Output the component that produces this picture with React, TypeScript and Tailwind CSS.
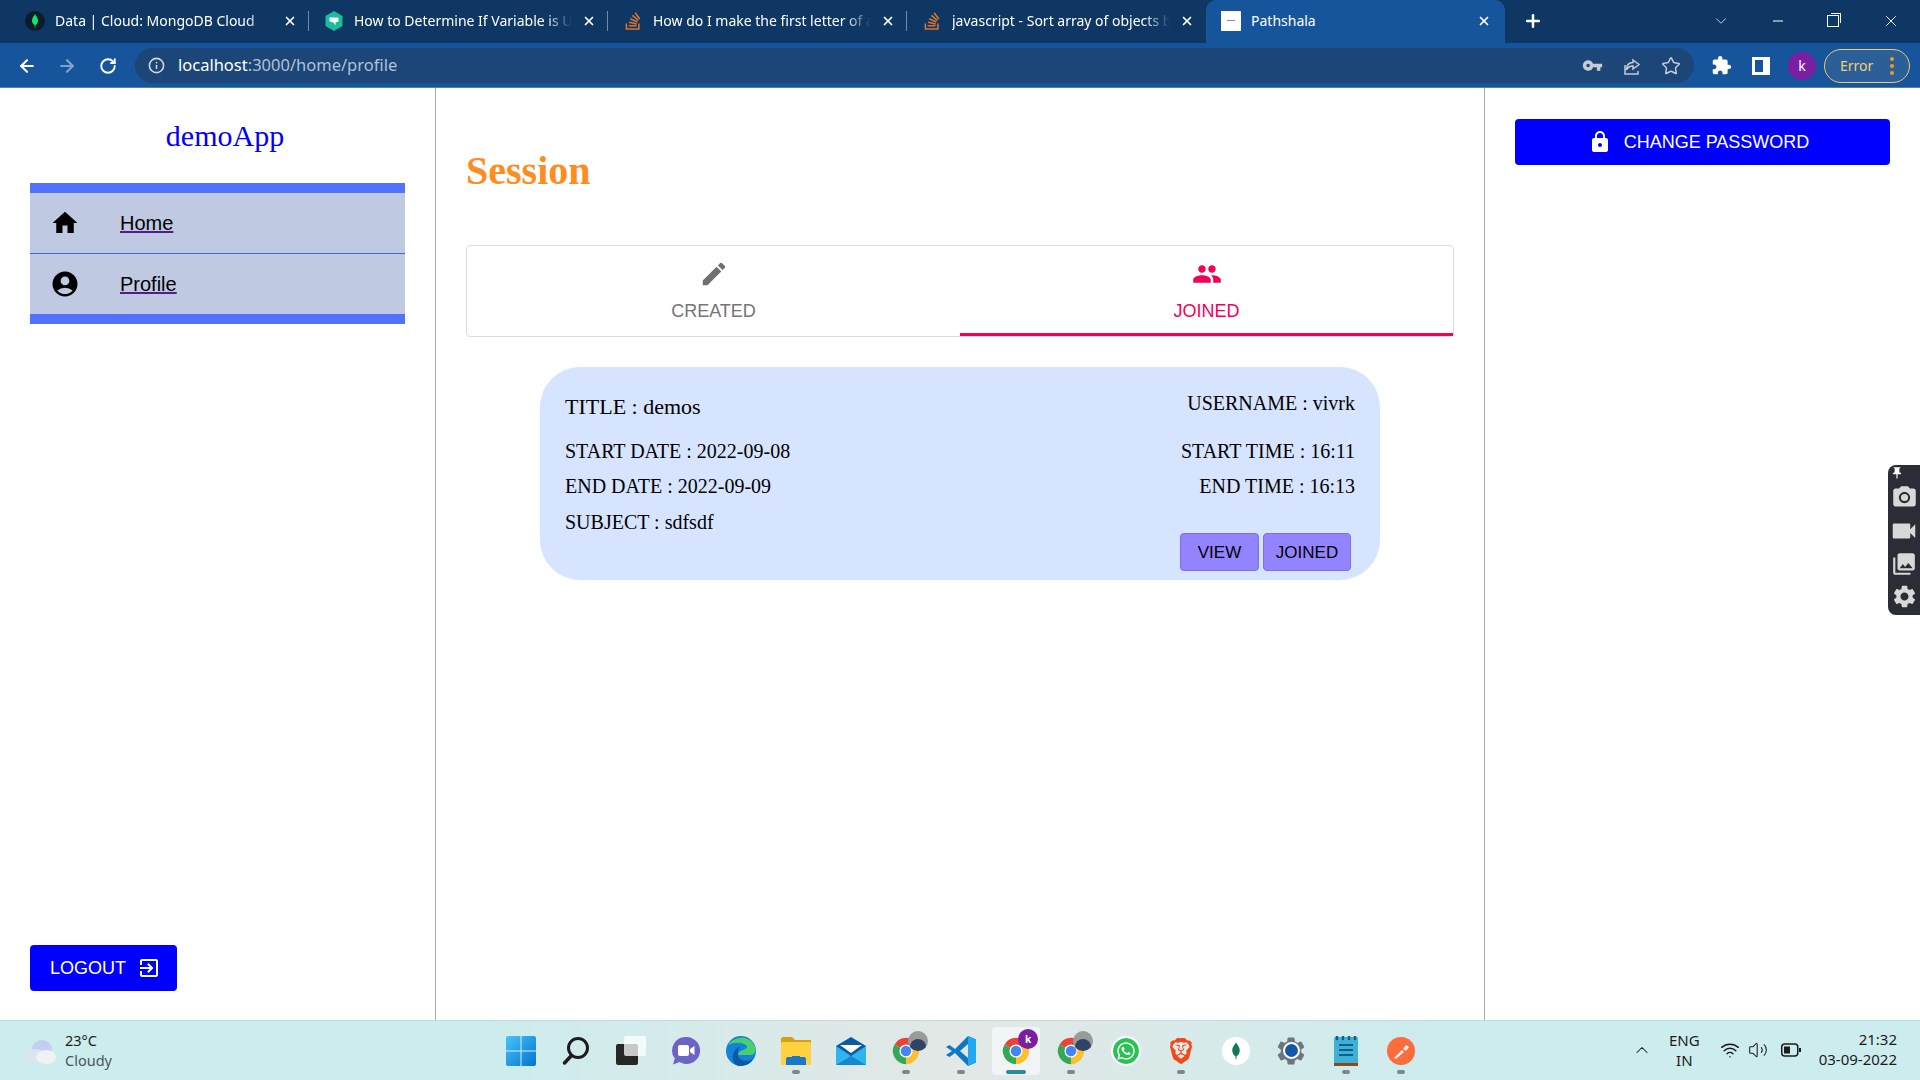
import type { ReactNode } from "react";
import { ArrowLeft, ArrowRight, RotateCw, Info, Star, X, Plus, ChevronDown, Minus, ChevronUp, Wifi, Volume2 } from "lucide-react";
import {
  MdHome,
  MdAccountCircle,
  MdEdit,
  MdPeople,
  MdLock,
  MdExitToApp,
  MdVpnKey,
  MdExtension,
  MdCameraAlt,
  MdVideocam,
  MdPhotoLibrary,
  MdSettings,
  MdPushPin,
} from "react-icons/md";
import { FaStackOverflow, FaWhatsapp } from "react-icons/fa";
import { SiBrave } from "react-icons/si";

const SANS = "font-['Liberation_Sans',Arial,sans-serif]";
const SERIF = "font-['Liberation_Serif','Times_New_Roman',serif]";
const UI = "font-['Noto_Sans','Open_Sans',sans-serif]";

/* Small logos */
const MongoLeaf = ({ className = "" }: { className?: string }) => (
  <svg viewBox="0 0 16 28" className={className}>
    <path d="M8 0c1 3 6 7 6 13 0 5-3 8-5 9l-.4 5h-1.2l-.4-5c-2-1-5-4-5-9C2 7 7 3 8 0z" fill="currentColor" />
  </svg>
);

const HexFav = () => (
  <svg viewBox="0 0 20 20" className="w-5 h-5">
    <path d="M10 0l8.5 5v10L10 20l-8.5-5V5z" fill="#1abc9c" />
    <path d="M5.5 6.5h9v4l-3 1v3l-2-3-4-1z" fill="#fff" />
  </svg>
);

const Chrome = () => (
  <svg viewBox="0 0 32 32" className="w-7 h-7">
    <path d="M16 16L3 8.5A15 15 0 0 1 29 8.5Z" fill="#ea4335" />
    <path d="M16 16L29 8.5A15 15 0 0 1 16 31Z" fill="#fbc02d" />
    <path d="M16 16L16 31A15 15 0 0 1 3 8.5Z" fill="#34a853" />
    <circle cx="16" cy="16" r="7.5" fill="#fff" />
    <circle cx="16" cy="16" r="6" fill="#4285f4" />
  </svg>
);

const PhotoBadge = () => (
  <span className="absolute top-[-6px] right-[-8px] w-5 h-5 rounded-full overflow-hidden bg-[#9a9a9a] flex items-end justify-center">
    <span className="w-4 h-3 rounded-t-full bg-[#2f4468]" />
  </span>
);

const WinLogo = () => (
  <svg viewBox="0 0 30 30" className="w-[30px] h-[30px]">
    <defs>
      <linearGradient id="w" x1="0" y1="0" x2="1" y2="1">
        <stop offset="0" stopColor="#45c5fb" />
        <stop offset="1" stopColor="#0472d0" />
      </linearGradient>
    </defs>
    <rect width="30" height="30" rx="2" fill="url(#w)" />
    <path d="M15 0v30M0 15h30" stroke="#d9f0f2" strokeWidth="1" />
  </svg>
);

const SearchLogo = () => (
  <svg viewBox="0 0 28 30" className="w-[28px] h-[30px]">
    <circle cx="16" cy="12" r="9.5" fill="none" stroke="#1c1c1c" strokeWidth="3" />
    <path d="M9.5 19.5L2.5 27" stroke="#1c1c1c" strokeWidth="3.5" strokeLinecap="round" />
  </svg>
);

const TaskView = () => (
  <svg viewBox="0 0 30 30" className="w-[30px] h-[30px]">
    <rect x="0" y="8" width="22" height="21" rx="2" fill="#262626" />
    <rect x="8" y="0" width="22" height="20" rx="2" fill="#fff" fillOpacity="0.75" />
  </svg>
);

const Meet = () => (
  <svg viewBox="0 0 30 30" className="w-[30px] h-[30px]">
    <path d="M15.5 1a13.5 13.5 0 1 1-7 25L2 28.5l1.8-6A13.5 13.5 0 0 1 15.5 1z" fill="#6b63c6" />
    <rect x="7" y="9" width="11" height="11" rx="2" fill="#fff" />
    <path d="M19 13l4.5-3v9L19 16z" fill="#fff" />
  </svg>
);

const Edge = () => (
  <svg viewBox="0 0 30 30" className="w-[30px] h-[30px]">
    <circle cx="15" cy="15" r="15" fill="#1283d8" />
    <path d="M2 9C6 1 24-3 29 11c2 6-2 8-6 8H12c0-5 9-5 9-8 0-4-12-6-19-2z" fill="#48cf6e" />
    <path d="M12 18c0 6 7 9 15 5-3 5-8 7-13 7C7 30 5 22 8 16c1-3 4-5 6-5-2 2-2 4-2 7z" fill="#0c5aa6" />
  </svg>
);

const Folder = () => (
  <svg viewBox="0 0 30 28" className="w-[30px] h-[28px]">
    <path d="M0 2a2 2 0 0 1 2-2h9l3 3h16v7H0z" fill="#d99f12" />
    <rect y="5" width="30" height="23" rx="1.5" fill="#fdd13f" />
    <path d="M5 22a2 2 0 0 1 2-2h4v-1h8v1h4a2 2 0 0 1 2 2v6H5z" fill="#1a78c8" />
  </svg>
);

const Mail = () => (
  <svg viewBox="0 0 30 28" className="w-[30px] h-[28px]">
    <path d="M0 9L15 0l15 9v19H0z" fill="#0c5aa6" />
    <path d="M4 8h22l-11 8z" fill="#fff" />
    <path d="M0 9l15 10L30 9v19H0z" fill="#2fb4ec" />
    <path d="M0 28l15-9 15 9z" fill="#1487d2" />
  </svg>
);

const VsCode = () => (
  <svg viewBox="0 0 30 30" className="w-[30px] h-[30px]">
    <path d="M22 0l8 3.5v23L22 30 9 17l-5.500 4L0 19l6-4-6-4 3.500-2L9 13z" fill="#0f78c4" />
    <path d="M22 0l8 3.500v23L22 30z" fill="#22a7f0" />
    <path d="M22 8l-8 7 8 7z" fill="#e0e8e6" />
  </svg>
);

const Settings = () => (
  <span className="relative flex items-center justify-center">
    <MdSettings className="w-[34px] h-[34px] text-[#6d7580]" />
    <span className="absolute w-[13px] h-[13px] rounded-full bg-[#1358a8] outline-2 outline-white" />
  </span>
);

const Notepad = () => (
  <svg viewBox="0 0 24 30" className="w-[24px] h-[30px]">
    <rect y="1" width="24" height="27" rx="1.5" fill="#3fb0d6" />
    <rect y="27" width="24" height="3" fill="#8a4b16" />
    <path d="M5 9h14M5 14h14M5 19h14" stroke="#0d5f8c" strokeWidth="1.800" />
    <path d="M3 0v3M9 0v3M15 0v3M21 0v3" stroke="#0d5f8c" strokeWidth="2.400" strokeLinecap="round" />
  </svg>
);

const Postman = () => (
  <svg viewBox="0 0 28 28" className="w-7 h-7">
    <circle cx="14" cy="14" r="14" fill="#fd6c3c" />
    <path d="M7 21l8-8 2 2-8 7zM16 12l3-4 3 2-3 4z" fill="#fff" fillOpacity="0.9" />
  </svg>
);

type TaskItem = { icon: ReactNode; dot?: boolean; active?: boolean };

const taskItems: TaskItem[] = [
  { icon: <WinLogo /> },
  { icon: <SearchLogo /> },
  { icon: <TaskView /> },
  { icon: <Meet /> },
  { icon: <Edge /> },
  { icon: <Folder />, dot: true },
  { icon: <Mail /> },
  {
    icon: (
      <span className="relative block">
        <Chrome />
        <PhotoBadge />
      </span>
    ),
    dot: true,
  },
  { icon: <VsCode />, dot: true },
  {
    icon: (
      <span className="relative block">
        <Chrome />
        <span className="absolute top-[-8px] right-[-8px] w-5 h-5 rounded-full bg-[#7b1fa2] text-white text-[10px] font-bold flex items-center justify-center">
          k
        </span>
      </span>
    ),
    active: true,
  },
  {
    icon: (
      <span className="relative block">
        <Chrome />
        <PhotoBadge />
      </span>
    ),
    dot: true,
  },
  {
    icon: (
      <span className="w-[26px] h-[26px] rounded-full bg-[#29c254] outline-2 outline-white flex items-center justify-center">
        <FaWhatsapp className="w-5 h-5 text-white" />
      </span>
    ),
  },
  { icon: <SiBrave className="w-[26px] h-[30px] text-[#f4481c]" />, dot: true },
  {
    icon: (
      <span className="w-7 h-7 rounded-full bg-white flex items-center justify-center">
        <MongoLeaf className="h-[22px] w-[10px] text-[#13794f]" />
      </span>
    ),
  },
  { icon: <Settings /> },
  { icon: <Notepad />, dot: true },
  { icon: <Postman />, dot: true },
];

type Tab = { title: string; icon: ReactNode };

const tabs: Tab[] = [
  {
    title: "Data | Cloud: MongoDB Cloud",
    icon: (
      <span className="w-5 h-5 rounded-full bg-[#0b1d2c] flex items-center justify-center">
        <MongoLeaf className="h-4 w-2 text-[#13e46a]" />
      </span>
    ),
  },
  { title: "How to Determine If Variable is U", icon: <HexFav /> },
  { title: "How do I make the first letter of a", icon: <FaStackOverflow className="w-5 h-5 text-[#d9762b]" /> },
  { title: "javascript - Sort array of objects b", icon: <FaStackOverflow className="w-5 h-5 text-[#d9762b]" /> },
];

function ChromeBar() {
  return (
    <div className={`${UI} shrink-0`}>
      {/* Tabs */}
      <div className="h-[43px] bg-[#0f3763] flex items-end pl-[10px] text-white text-[14px]">
        {tabs.map((tab, i) => (
          <div key={tab.title} className="w-[299px] h-[43px] flex items-center pl-[15px] pr-[12px] pb-[2px] relative">
            <span className="w-5 h-5 flex items-center justify-center shrink-0">{tab.icon}</span>
            <span className="ml-[10px] flex-1 whitespace-nowrap overflow-hidden [mask-image:linear-gradient(to_right,black_88%,transparent)]">
              {tab.title}
            </span>
            <X className="w-[14px] h-[14px] ml-[10px] shrink-0" strokeWidth={3} />
            {i < 3 && <span className="absolute right-0 top-[11px] h-[20px] w-px bg-[#6f8cab]" />}
          </div>
        ))}
        <div className="w-[299px] h-[43px] bg-[#16559c] rounded-t-[10px] flex items-center pl-[15px] pr-[14px] pb-[2px]">
          <span className="w-5 h-5 bg-white flex items-center justify-center shrink-0">
            <span className="w-2 h-px bg-[#888]" />
          </span>
          <span className="ml-[10px] flex-1">Pathshala</span>
          <X className="w-[14px] h-[14px] shrink-0" strokeWidth={3} />
        </div>
        <div className="h-[43px] flex items-center ml-[18px] pb-[2px]">
          <Plus className="w-[20px] h-[20px]" strokeWidth={3} />
        </div>
        <div className="ml-auto h-[43px] flex items-center pb-[2px]">
          <ChevronDown className="w-[18px] h-[18px] mr-[40px]" strokeWidth={1} />
          <Minus className="w-[16px] h-[16px] mr-[41px]" strokeWidth={1.5} />
          <span className="w-[12px] h-[12px] border border-white mr-[43px] relative">
            <span className="absolute top-[-3px] right-[-3px] w-[10px] h-[10px] border-t border-r border-white" />
          </span>
          <X className="w-[18px] h-[18px] mr-[20px]" strokeWidth={1.25} />
        </div>
      </div>
      {/* Toolbar */}
      <div className="h-[45px] bg-[#16559c] flex items-center pt-[1px] text-white border-b border-[#4f7fb6]">
        <ArrowLeft className="w-5 h-5 ml-[17px]" strokeWidth={2.5} />
        <ArrowRight className="w-5 h-5 ml-[20px] text-[#7fa3cc]" strokeWidth={2.5} />
        <RotateCw className="w-[18px] h-[18px] ml-[22px]" strokeWidth={2.5} />
        <div className="ml-[18px] w-[1559px] h-[35px] rounded-full bg-[#1b4677] flex items-center pl-[13px] pr-[13px]">
          <Info className="w-[17px] h-[17px] text-[#d0d7e0]" strokeWidth={2.25} />
          <span className="ml-[13px] text-[16.5px] text-white">
            localhost<span className="text-[#b3c2d4]">:3000/home/profile</span>
          </span>
          <div className="ml-auto flex items-center gap-[19px] text-[#c5ccd6]">
            <MdVpnKey className="w-[21px] h-[21px]" />
            <svg viewBox="0 0 20 20" className="w-[20px] h-[20px]" fill="none" stroke="currentColor" strokeWidth="1.5">
              <path d="M3 9v9h13v-3M11 4l6 4.500-6 4.500v-3c-3 0-5 1-6.500 4 0-5 2.500-7.500 6.500-7.500z" />
            </svg>
            <Star className="w-[20px] h-[20px]" strokeWidth={1.75} />
          </div>
        </div>
        <MdExtension className="w-[21px] h-[21px] ml-[17px]" />
        <span className="w-[18px] h-[18px] ml-[20px] border-[3px] border-white border-r-[7px] bg-transparent" />
        <span className="w-[28px] h-[28px] ml-[18px] rounded-full bg-[#7b1fa2] flex items-center justify-center text-[14px]">
          k
        </span>
        <div className="ml-[8px] w-[86px] h-[34px] rounded-full border border-[#f0c869] bg-[#2a5f98] flex items-center pl-[15px] text-[#f6cf74] text-[14px]">
          Error
          <span className="ml-[17px] flex flex-col gap-[3px]">
            <span className="w-[4px] h-[4px] rounded-full bg-[#f39c12]" />
            <span className="w-[4px] h-[4px] rounded-full bg-[#f39c12]" />
            <span className="w-[4px] h-[4px] rounded-full bg-[#f39c12]" />
          </span>
        </div>
      </div>
    </div>
  );
}

function Sidebar() {
  return (
    <aside className={`w-[436px] shrink-0 border-r border-[#aaaaaa] px-[30px] pb-[29px] pt-[31px] flex flex-col ${SANS}`}>
      <div className={`${SERIF} pl-[15px] text-center text-[30px] leading-[34px] text-[#0000ff]`}>demoApp</div>
      <nav className="mt-[30px] w-[375px] bg-[#bfc9e2] border-y-[10px] border-[#5470ff]">
        <div className="h-[61px] flex items-center pl-[20px] border-b border-[#4a63d0]">
          <MdHome className="w-[30px] h-[30px] text-black" />
          <a className="ml-[40px] text-[20px] text-black underline decoration-[#551a8b]">Home</a>
        </div>
        <div className="h-[60px] flex items-center pl-[20px]">
          <MdAccountCircle className="w-[30px] h-[30px] text-black" />
          <a className="ml-[40px] text-[20px] text-black underline decoration-[#551a8b]">Profile</a>
        </div>
      </nav>
      <button className="mt-auto w-[147px] h-[46px] rounded bg-[#0000ff] text-white text-[18px] flex items-center pl-[20px]">
        LOGOUT
        <MdExitToApp className="w-6 h-6 ml-[11px]" />
      </button>
    </aside>
  );
}

function SessionCard() {
  return (
    <div className={`${SERIF} mt-[30px] mx-auto w-[840px] h-[213px] rounded-[40px] bg-[#d6e4ff] px-[25px] flex justify-between text-black text-[20px] leading-[24px]`}>
      <div className="pt-[27px] flex flex-col">
        <div className="text-[22px] leading-[26px]">TITLE : demos</div>
        <div className="mt-[19px]">START DATE : 2022-09-08</div>
        <div className="mt-[11px]">END DATE : 2022-09-09</div>
        <div className="mt-[12px]">SUBJECT : sdfsdf</div>
      </div>
      <div className="pt-[24px] flex flex-col items-end">
        <div>USERNAME : vivrk</div>
        <div className="mt-[24px]">START TIME : 16:11</div>
        <div className="mt-[11px]">END TIME : 16:13</div>
        <div className={`${SANS} mt-[35px] mr-[4px] flex gap-[4px] text-[17px]`}>
          <button className="w-[79px] h-[38px] pt-[1px] rounded bg-[#9483ff] border border-[#7a70e0]">VIEW</button>
          <button className="w-[88px] h-[38px] pt-[1px] rounded bg-[#9483ff] border border-[#7a70e0]">JOINED</button>
        </div>
      </div>
    </div>
  );
}

function Main() {
  return (
    <main className="flex-1 min-w-0 px-[30px] pt-[60px]">
      <h1 className={`${SERIF} text-[40px] leading-[46px] font-bold text-[#ff8c1e]`}>Session</h1>
      <div className={`${SANS} mt-[51px] h-[92px] rounded border border-[#dcdcdc] flex text-[18px]`}>
        <div className="flex-1 flex flex-col items-center pt-[13px] text-[#757575]">
          <MdEdit className="w-[30px] h-[30px] text-[#6f6f6f]" />
          <span className="mt-[12px] leading-[21px]">CREATED</span>
        </div>
        <div className="flex-1 flex flex-col items-center pt-[13px] text-[#f50057] border-b-[3px] border-[#f50057]">
          <MdPeople className="w-[30px] h-[30px]" />
          <span className="mt-[12px] leading-[21px]">JOINED</span>
        </div>
      </div>
      <SessionCard />
    </main>
  );
}

function RightPanel() {
  return (
    <aside className={`w-[436px] shrink-0 border-l border-[#aaaaaa] pl-[30px] pr-[30px] pt-[31px] ${SANS}`}>
      <button className="w-[375px] h-[46px] pr-[8px] rounded bg-[#0000ff] text-white text-[18px] flex items-center justify-center gap-[12px]">
        <MdLock className="w-6 h-6" />
        CHANGE PASSWORD
      </button>
    </aside>
  );
}

function ScreenshotTool() {
  return (
    <div className="absolute right-0 top-[465px] w-[32px] h-[150px] rounded-l-[8px] bg-[#2a2d35] text-[#d8d8d8] flex flex-col items-center overflow-hidden">
      <div className="h-[16px] w-full flex items-center pl-[2px]">
        <MdPushPin className="w-[14px] h-[14px] text-white" />
      </div>
      <div className="h-[33px] flex items-center"><MdCameraAlt className="w-[27px] h-[27px]" /></div>
      <div className="h-[33px] flex items-center"><MdVideocam className="w-[30px] h-[30px]" /></div>
      <div className="h-[33px] flex items-center"><MdPhotoLibrary className="w-[26px] h-[26px]" /></div>
      <div className="h-[33px] flex items-center"><MdSettings className="w-[27px] h-[27px]" /></div>
    </div>
  );
}

function Taskbar() {
  return (
    <div className={`${UI} shrink-0 h-[60px] border-t border-[#c0dcdc] bg-[linear-gradient(to_right,#cdeced,#cdeced_25%,#e2e8e6_50%,#cdeced_75%,#cdeced)] relative flex items-center text-[15px] leading-[20px]`}>
      <div className="absolute left-[24px] top-[9px] flex items-center text-[14.5px]">
        <svg viewBox="0 0 32 26" className="w-[32px] h-[26px] mt-[4px]">
          <ellipse cx="18" cy="10" rx="10" ry="9" fill="#c3cff0" />
          <ellipse cx="11" cy="17" rx="10" ry="7" fill="#dbe4ef" />
          <ellipse cx="22" cy="18" rx="10" ry="7" fill="#eef2f4" />
        </svg>
        <div className="ml-[9px]">
          <div className="text-[#1c1c1c]">23°C</div>
          <div className="text-[#4b5558]">Cloudy</div>
        </div>
      </div>

      <div className="mx-auto flex h-full items-center pl-[2px]">
        {taskItems.map((item, i) => (
          <div key={i} className="relative w-[55px] h-full flex items-center justify-center">
            {item.active && (
              <span className="absolute left-[3px] top-[6px] w-[48px] h-[48px] rounded bg-[#f1f4f4]" />
            )}
            <span className="relative">{item.icon}</span>
            {item.dot && <span className="absolute bottom-[6px] left-[23px] w-[8px] h-[4px] rounded-full bg-[#7a8a8c]" />}
            {item.active && <span className="absolute bottom-[6px] left-[17px] w-[20px] h-[4px] rounded-full bg-[#2b8a9e]" />}
          </div>
        ))}
      </div>

      <div className="absolute right-[23px] top-[9px] flex items-center text-[#1c1c1c]">
        <ChevronUp className="w-[20px] h-[20px] mr-[17px]" strokeWidth={1.25} />
        <div className="text-center mr-[20px]">
          ENG
          <br />
          IN
        </div>
        <Wifi className="w-[20px] h-[20px] mr-[8px]" strokeWidth={1.75} />
        <Volume2 className="w-[20px] h-[20px] mr-[13px]" strokeWidth={1.25} />
        <svg viewBox="0 0 20 14" className="w-[20px] h-[14px] mr-[18px]">
          <rect x="0.75" y="1" width="16" height="12" rx="3" fill="none" stroke="#1c1c1c" strokeWidth="1.5" />
          <rect x="3" y="3.5" width="6" height="7" fill="#1c1c1c" />
          <rect x="18" y="5" width="2" height="4" fill="#1c1c1c" />
        </svg>
        <div className="text-right mt-[-2px]">
          21:32
          <br />
          03-09-2022
        </div>
      </div>
    </div>
  );
}

export default function App() {
  return (
    <div className="relative w-[1920px] h-[1080px] overflow-hidden bg-white flex flex-col">
      <ChromeBar />
      <div className="flex-1 flex min-h-0">
        <Sidebar />
        <Main />
        <RightPanel />
      </div>
      <Taskbar />
      <ScreenshotTool />
    </div>
  );
}
